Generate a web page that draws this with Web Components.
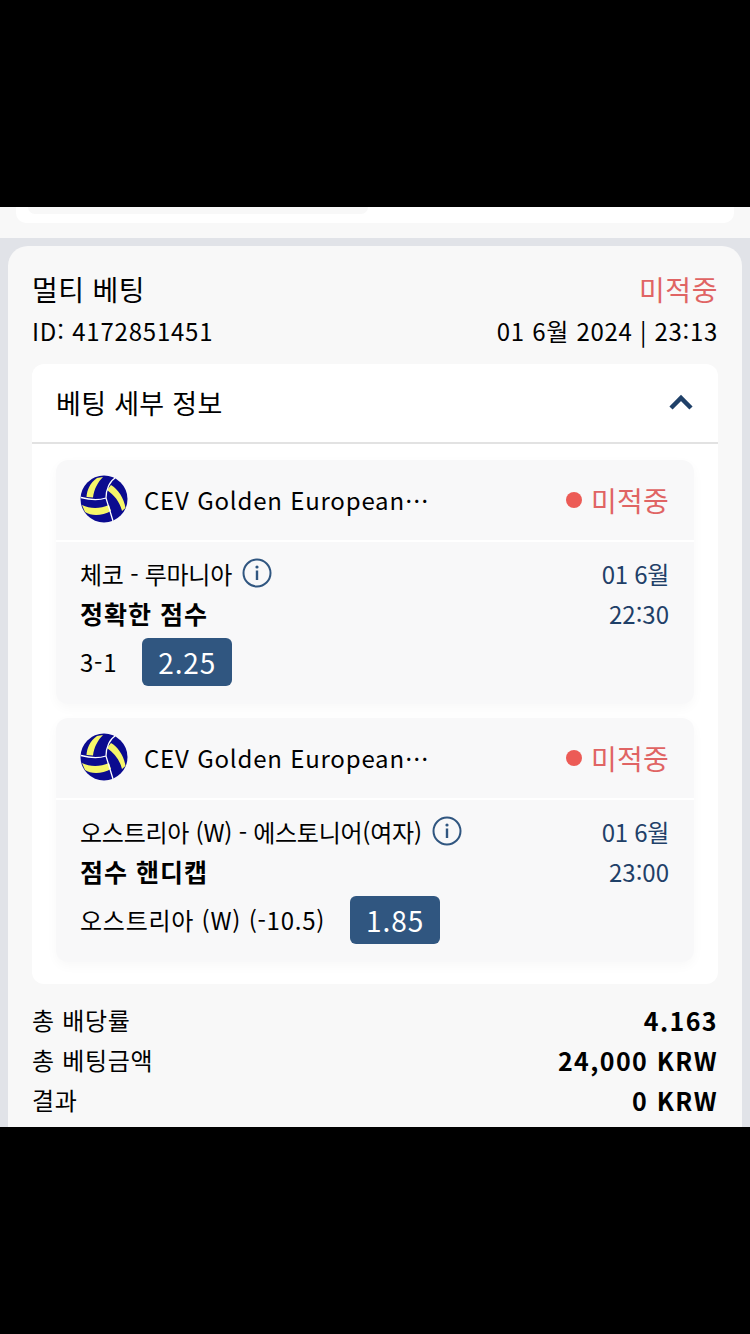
<!DOCTYPE html>
<html lang="ko">
<head>
<meta charset="utf-8">
<style>
  * { box-sizing: border-box; }
  html, body { margin: 0; padding: 0; background: #000; }
  body {
    width: 750px;
    height: 1334px;
    overflow: hidden;
    font-family: "Noto Sans CJK KR", "Noto Sans", sans-serif;
  }
</style>
</head>
<body>
<phone-frame>
  <prev-strip></prev-strip>
  <bet-ticket title-text="멀티 베팅" status="미적중" bet-id="ID: 4172851451" date="01 6월 2024 | 23:13">
    <bet-leg teams="체코 - 루마니아" market="정확한 점수" pick="3-1" odds="2.25" day="01 6월" time="22:30"></bet-leg>
    <bet-leg teams="오스트리아 (W) - 에스토니어(여자)" market="점수 핸디캡" pick="오스트리아 (W) (-10.5)" odds="1.85" day="01 6월" time="23:00"></bet-leg>
    <summary-row slot="summary" label="총 배당률" value="4.163"></summary-row>
    <summary-row slot="summary" label="총 베팅금액" value="24,000 KRW"></summary-row>
    <summary-row slot="summary" label="결과" value="0 KRW"></summary-row>
  </bet-ticket>
</phone-frame>
<script>
class PhoneFrame extends HTMLElement {
  constructor() {
    super();
    this.attachShadow({ mode: "open" }).innerHTML = `
      <style>
        :host { display: block; width: 750px; height: 1334px; padding: 207px 0; background: #000; box-sizing: border-box; }
        .screen { height: 920px; overflow: hidden; background: #e1e3e8; }
      </style>
      <div class="screen"><slot></slot></div>
    `;
  }
}

class PrevStrip extends HTMLElement {
  constructor() {
    super();
    this.attachShadow({ mode: "open" }).innerHTML = `
      <style>
        :host { display: block; height: 31px; background: #f8f8f8; }
        .card {
          height: 16px; margin: 0 16px; padding: 0 12px;
          background: #fff; border-radius: 0 0 10px 10px;
        }
        .inner { width: 340px; height: 7px; background: #f8f8f8; border-radius: 0 0 10px 10px; }
      </style>
      <div class="card"><div class="inner"></div></div>
    `;
  }
}

class BetTicket extends HTMLElement {
  constructor() {
    super();
    this.attachShadow({ mode: "open" }).innerHTML = `
      <style>
        * { box-sizing: border-box; }
        :host { display: block; margin: 8px 8px 0; padding: 24px 24px 20px; background: #f8f8f8; border-radius: 20px 20px 0 0; color: #000; }
        .row { display: flex; justify-content: space-between; }
        .title { font-size: 28px; line-height: 38px; height: 38px; font-weight: 400; letter-spacing: .4px; }
        .status { color: #e06464; letter-spacing: .6px; }
        .meta { font-size: 24px; line-height: 36px; height: 36px; margin-top: 5px; letter-spacing: .7px; }
        .meta span:first-child { letter-spacing: .8px; }
        .details { margin-top: 15px; background: #fff; border-radius: 12px; padding-bottom: 22px; }
        .head {
          height: 80px; padding: 0 24px 2px 24px; border-bottom: 2px solid #e2e2e2;
          display: flex; align-items: center; justify-content: space-between;
          font-size: 27px; letter-spacing: .3px;
        }
        .legs { display: flex; flex-direction: column; gap: 14px; padding: 16px 24px 0; }
        .summary { display: block; padding-top: 16px; }
      </style>
      <div class="row title"><span>${this.getAttribute("title-text")}</span><span class="status">${this.getAttribute("status")}</span></div>
      <div class="row meta"><span>${this.getAttribute("bet-id")}</span><span>${this.getAttribute("date")}</span></div>
      <div class="details">
        <div class="head">
          <span>베팅 세부 정보</span>
          <svg width="26" height="16" viewBox="0 0 26 16"><path d="M3 14 13 4l10 10" fill="none" stroke="#1f4068" stroke-width="4.5"/></svg>
        </div>
        <div class="legs"><slot></slot></div>
      </div>
      <div class="summary"><slot name="summary"></slot></div>
    `;
  }
}

class BetLeg extends HTMLElement {
  constructor() {
    super();
    const a = (n) => this.getAttribute(n);
    this.attachShadow({ mode: "open" }).innerHTML = `
      <style>
        * { box-sizing: border-box; }
        :host { display: block; background: #f8f8f9; border-radius: 12px; box-shadow: 0 4px 12px rgba(0,0,0,.03); }
        .top {
          height: 82px; border-bottom: 2px solid #fff; padding: 0 25px 0 24px;
          display: flex; align-items: center;
        }
        volley-ball { margin-bottom: 2px; }
        .league { margin-left: 16px; font-size: 24px; letter-spacing: .8px; white-space: nowrap; line-height: 36px; }
        .state { margin-left: auto; display: flex; align-items: center; gap: 9px; color: #e06464; font-size: 28px; letter-spacing: .2px; }
        .dot { width: 16px; height: 16px; border-radius: 50%; background: #ec5b56; }
        .body { display: flex; justify-content: space-between; padding: 11px 25px 18px 24px; }
        .teams { display: flex; align-items: center; gap: 10px; height: 40px; font-size: 24px; letter-spacing: -.25px; white-space: nowrap; }
        .market { height: 40px; line-height: 40px; font-size: 25px; font-weight: 700; letter-spacing: 1px; }
        .pick { display: flex; align-items: center; gap: 25px; height: 48px; margin-top: 5px; font-size: 24px; letter-spacing: .75px; white-space: nowrap; }
        .pick-name { padding-bottom: 1px; }
        .odds { width: 90px; height: 48px; line-height: 48px; border-radius: 6px; background: #305680; color: #fff; text-align: center; font-size: 28px; letter-spacing: .9px; }
        .when { margin-top: 1px; text-align: right; color: #1f4068; font-size: 24px; line-height: 40px; }
        .day { letter-spacing: -.3px; }
      </style>
      <div class="top">
        <volley-ball></volley-ball>
        <span class="league">CEV Golden European…</span>
        <span class="state"><span class="dot"></span>미적중</span>
      </div>
      <div class="body">
        <div>
          <div class="teams"><span>${a("teams")}</span>
            <svg width="30" height="30" viewBox="0 0 30 30"><circle cx="15" cy="15" r="13.500" fill="none" stroke="#305680" stroke-width="2"/><circle cx="15" cy="9" r="1.600" fill="#305680"/><rect x="13.800" y="12.500" width="2.400" height="9.500" fill="#305680"/></svg>
          </div>
          <div class="market">${a("market")}</div>
          <div class="pick"><span class="pick-name">${a("pick")}</span><span class="odds">${a("odds")}</span></div>
        </div>
        <div class="when"><div class="day">${a("day")}</div><div>${a("time")}</div></div>
      </div>
    `;
  }
}

class VolleyBall extends HTMLElement {
  constructor() {
    super();
    this.attachShadow({ mode: "open" }).innerHTML = `
      <style>:host { display: block; width: 48px; height: 48px; flex: none; } svg { display: block; }</style>
      <svg width="48" height="48" viewBox="0 0 48 48">
        <circle cx="24" cy="24" r="23.500" fill="#0b0b8f"/>
        <path d="M17 3C10 8 7 15 6.500 22L13 22.500C14 14 18 7 23 2Z" fill="#f6f66a"/>
        <path d="M27 15 31 10C38 14 44 23 45.500 33L42 36C40 27 34 20 27 15Z" fill="#f6f66a"/>
        <path d="M2 30C10 34 20 34 29 30L31 36C22 41 11 41 5 37Z" fill="#f6f66a"/>
        <path d="M1 22.500C10 25 20 25 26 23L33 46M26 23C26 14 30 6 35 3" fill="none" stroke="#fff" stroke-width="1.300"/>
      </svg>
    `;
  }
}

class SummaryRow extends HTMLElement {
  constructor() {
    super();
    this.attachShadow({ mode: "open" }).innerHTML = `
      <style>
        :host { display: flex; justify-content: space-between; height: 40px; line-height: 40px; font-size: 24px; }
        span { letter-spacing: .7px; }
        b { font-size: 25px; font-weight: 700; letter-spacing: 1.4px; }
      </style>
      <span>${this.getAttribute("label")}</span><b>${this.getAttribute("value")}</b>
    `;
  }
}

customElements.define("phone-frame", PhoneFrame);
customElements.define("prev-strip", PrevStrip);
customElements.define("bet-ticket", BetTicket);
customElements.define("bet-leg", BetLeg);
customElements.define("volley-ball", VolleyBall);
customElements.define("summary-row", SummaryRow);
</script>
</body>
</html>
